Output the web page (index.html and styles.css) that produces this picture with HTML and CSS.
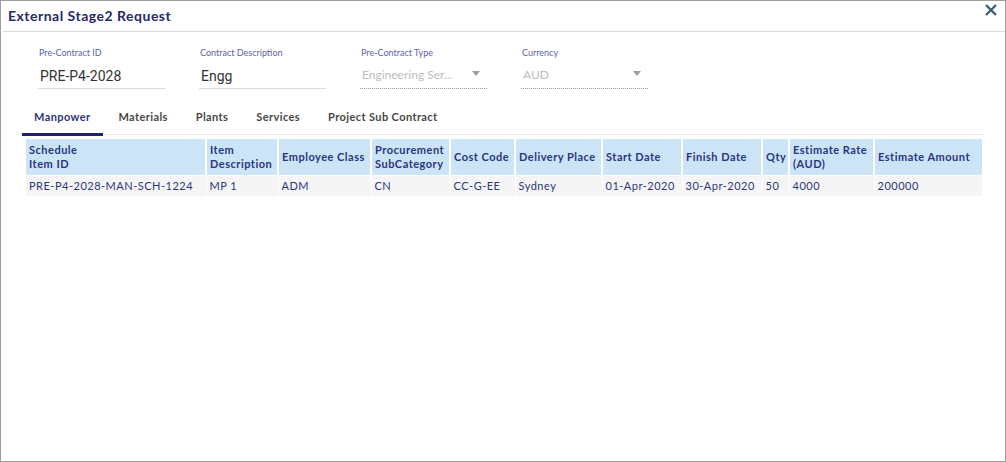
FILE: index.html
```html
<!DOCTYPE html>
<html>
<head>
<meta charset="utf-8">
<link rel="stylesheet" href="styles.css">
</head>
<body>
<div class="dialog">
  <div class="header">
    <div class="title">External Stage2 Request</div>
    <button class="close" aria-label="Close">
      <svg width="12" height="12" viewBox="0 0 12 12"><path d="M1 1 L11 11 M11 1 L1 11" stroke="#3b5a6d" stroke-width="2.2" fill="none"/></svg>
    </button>
  </div>
  <div class="form">
    <div class="field">
      <div class="label">Pre-Contract ID</div>
      <div class="value">PRE-P4-2028</div>
    </div>
    <div class="field">
      <div class="label">Contract Description</div>
      <div class="value">Engg</div>
    </div>
    <div class="field select">
      <div class="label">Pre-Contract Type</div>
      <div class="value">Engineering Ser... <span class="arrow"></span></div>
    </div>
    <div class="field select">
      <div class="label">Currency</div>
      <div class="value">AUD <span class="arrow"></span></div>
    </div>
  </div>
  <div class="tabs">
    <div class="tab active">Manpower</div>
    <div class="tab">Materials</div>
    <div class="tab">Plants</div>
    <div class="tab">Services</div>
    <div class="tab">Project Sub Contract</div>
  </div>
  <table class="grid">
    <colgroup>
      <col style="width:180px"><col style="width:72px"><col style="width:93px"><col style="width:79px"><col style="width:65px"><col style="width:87px"><col style="width:80px"><col style="width:80px"><col style="width:27px"><col style="width:85px"><col style="width:108px">
    </colgroup>
    <thead>
      <tr>
        <th>Schedule<br>Item ID</th>
        <th>Item<br>Description</th>
        <th>Employee Class</th>
        <th>Procurement SubCategory</th>
        <th>Cost Code</th>
        <th>Delivery Place</th>
        <th>Start Date</th>
        <th>Finish Date</th>
        <th>Qty</th>
        <th>Estimate Rate (AUD)</th>
        <th>Estimate Amount</th>
      </tr>
    </thead>
    <tbody>
      <tr>
        <td>PRE-P4-2028-MAN-SCH-1224</td>
        <td>MP 1</td>
        <td>ADM</td>
        <td>CN</td>
        <td>CC-G-EE</td>
        <td>Sydney</td>
        <td>01-Apr-2020</td>
        <td>30-Apr-2020</td>
        <td>50</td>
        <td>4000</td>
        <td>200000</td>
      </tr>
    </tbody>
  </table>
</div>
</body>
</html>
```

FILE: styles.css
```css
* { box-sizing: border-box; }
html, body { margin: 0; padding: 0; background: #fff; }
body { font-family: Lato, "Noto Sans", sans-serif; }
.dialog {
  width: 1006px;
  height: 462px;
  border: 1px solid #9e9e9e;
  background: #fff;
}
.header {
  height: 31px;
  margin: 0 0 0 2px;
  border-bottom: 1px solid #dcdcdc;
  display: flex;
  align-items: center;
  justify-content: space-between;
}
.title {
  font-size: 14px;
  font-weight: 700;
  color: #26296b;
  padding-left: 5px;
  padding-bottom: 2px;
  letter-spacing: 0.5px;
}
.close {
  border: 0;
  background: none;
  padding: 0;
  margin: 0 7px 0 0;
  width: 14px;
  height: 14px;
  display: flex;
  align-items: center;
  justify-content: center;
  align-self: flex-start;
  margin-top: 2px;
}
.form {
  display: flex;
  gap: 34px;
  padding: 14px 0 0 37px;
}
.field {
  width: 127px;
}
.label {
  font-size: 9px;
  color: #5e5fae;
  padding-left: 1px;
  height: 14px;
  line-height: 14px;
}
.value {
  font-family: Roboto, "Noto Sans", sans-serif;
  font-size: 14px;
  color: #333;
  height: 29px;
  line-height: 29px;
  padding-left: 2px;
  padding-top: 2px;
  border-bottom: 1px solid #dcdcdc;
}
.select .value {
  font-family: Lato, sans-serif;
  font-size: 12px;
  color: #bdbdbd;
  border-bottom: 1px dotted #9a9a9a;
  display: flex;
  justify-content: space-between;
  align-items: center;
  padding-right: 7px;
  padding-top: 0;
}
.arrow {
  width: 0;
  height: 0;
  border-left: 4px solid transparent;
  border-right: 4px solid transparent;
  border-top: 5px solid #9e9e9e;
  margin-top: -2px;
}
.tabs {
  display: flex;
  margin: 16px 20px 0 19px;
  border-bottom: 1px solid #ececec;
  height: 30px;
}
.tab {
  position: relative;
  padding: 0 14px;
  font-size: 11px;
  font-weight: 700;
  color: #474747;
  line-height: 24px;
  letter-spacing: 0.4px;
}
.tab.active { color: #2f3379; }
.tab.active::after {
  content: "";
  position: absolute;
  left: 2px;
  right: 1px;
  bottom: -2px;
  height: 3px;
  background: #1f1f70;
}
.grid {
  margin: 4px 0 0 25px;
  width: 956px;
  table-layout: fixed;
  border-collapse: collapse;
  font-size: 11px;
  color: #2c3580;
  letter-spacing: 0.5px;
}
.grid th {
  background: #cbe4f7;
  text-align: left;
  font-weight: 700;
  padding: 2px 3px;
  height: 36px;
  line-height: 14px;
  border: 1px solid #fff;
  border-width: 0 2px 1px 0;
  vertical-align: middle;
}
.grid th:last-child, .grid td:last-child { border-right: 0; }
.grid td {
  background: #f5f5f5;
  padding: 0 3px;
  height: 21px;
  border-right: 1px solid #fff;
  white-space: nowrap;
}
```
